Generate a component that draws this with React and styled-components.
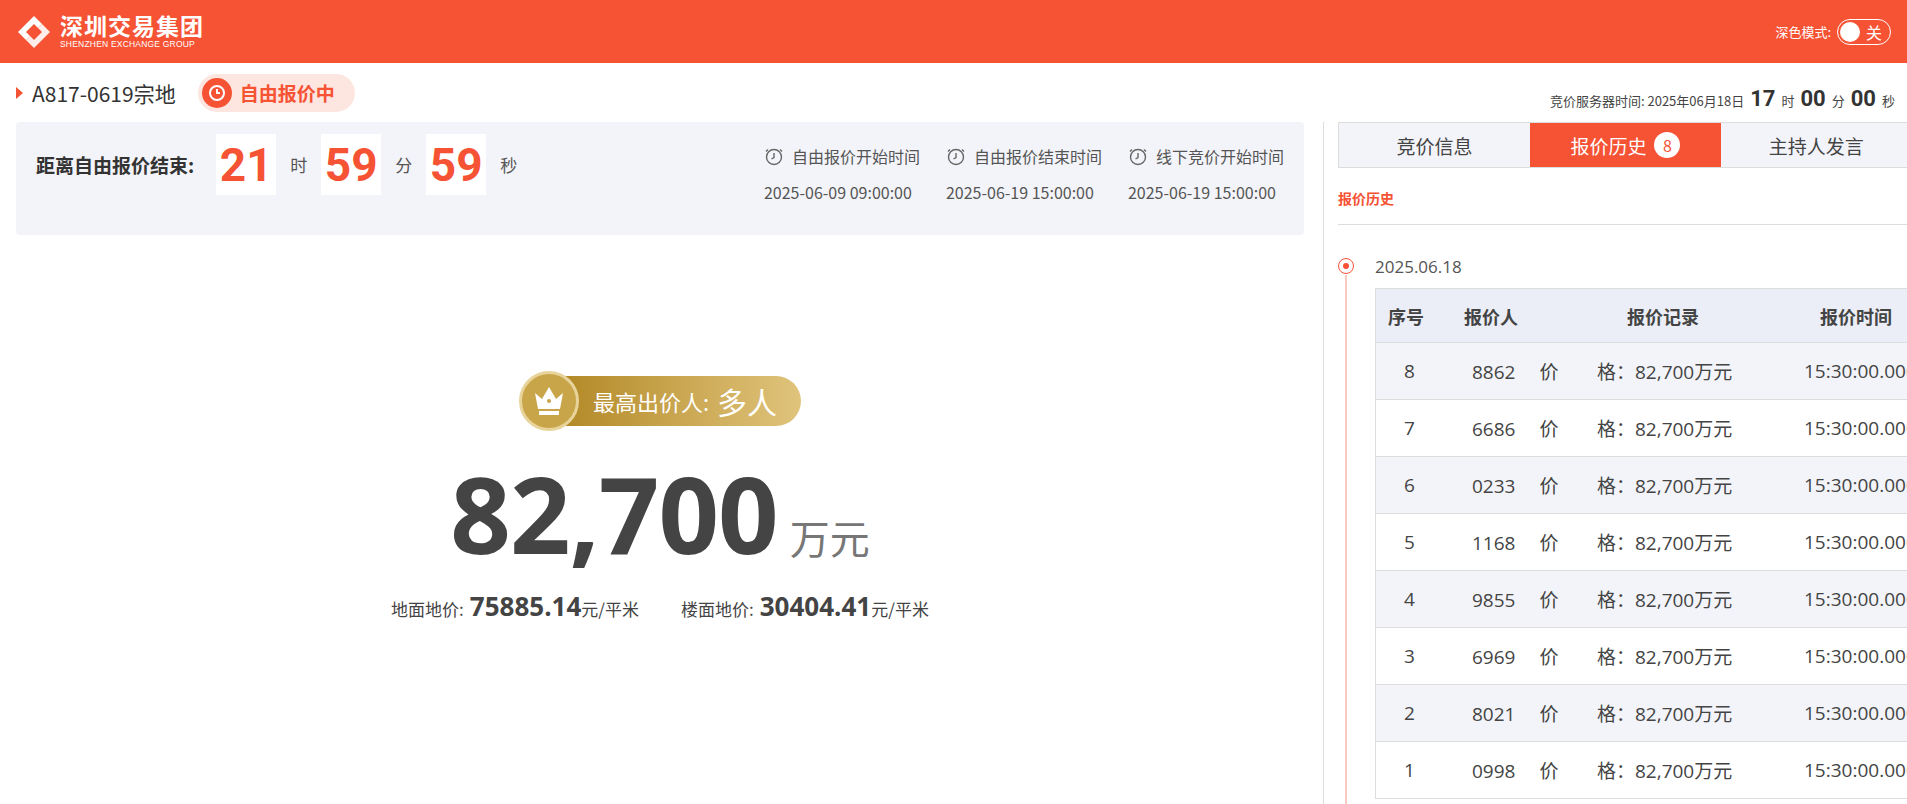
import React from "react";
import styled, { createGlobalStyle } from "styled-components";

const G = createGlobalStyle`
  html,body{margin:0;padding:0;background:#fff;}
  body{font-family:"Noto Sans CJK SC","Noto Sans",sans-serif;color:#333;overflow:hidden;}
`;
const RED = "#f65234";

const Header = styled.header`
  height:63px;background:${RED};display:flex;align-items:center;justify-content:space-between;padding:0 16px;box-sizing:border-box;
`;
const Logo = styled.div`display:flex;align-items:center;gap:8px;color:#fff;`;
const LogoText = styled.div`display:flex;flex-direction:column;line-height:1;`;
const LogoCn = styled.div`font-size:23px;font-weight:700;letter-spacing:1px;`;
const LogoEn = styled.div`font-size:8.5px;font-family:"Liberation Sans",sans-serif;margin-top:3px;letter-spacing:.2px;`;
const Dark = styled.div`display:flex;align-items:center;gap:6px;color:#fff;font-size:13px;`;
const Toggle = styled.div`
  width:54px;height:26px;border:1.5px solid #fff;border-radius:14px;box-sizing:border-box;display:flex;align-items:center;justify-content:space-between;padding:0 8px 0 2px;font-size:16px;
  &::before{content:"";width:20px;height:20px;border-radius:50%;background:#fff;}
`;
const TitleRow = styled.div`height:59px;display:flex;align-items:center;justify-content:space-between;padding:0 12px 0 16px;`;
const TitleLeft = styled.div`display:flex;align-items:center;gap:22px;`;
const Title = styled.div`display:flex;align-items:center;gap:9px;font-size:21px;color:#333;
  &::before{content:"";border-left:7px solid ${RED};border-top:6px solid transparent;border-bottom:6px solid transparent;}
`;
const Status = styled.div`display:flex;align-items:center;gap:8px;background:#fde6df;border-radius:20px;height:38px;box-sizing:border-box;padding:0 20px 0 4px;color:${RED};font-weight:700;font-size:19px;`;
const StatusIcon = styled.div`width:30px;height:30px;border-radius:50%;background:${RED};display:flex;align-items:center;justify-content:center;`;
const Server = styled.div`display:flex;align-items:baseline;gap:6px;font-size:13px;color:#444;white-space:nowrap;padding-top:12px;`;
const ServerBig = styled.b`font-family:"Roboto",sans-serif;font-size:22px;color:#333;`;
const Body = styled.div`display:flex;`;
const Left = styled.div`width:1304px;padding-left:16px;box-sizing:border-box;flex:none;`;
const Panel = styled.div`background:#f3f4f9;border-radius:4px;height:113px;display:flex;justify-content:space-between;padding:12px 20px 0 20px;box-sizing:border-box;`;
const Countdown = styled.div`display:flex;align-items:center;height:61px;font-size:16px;color:#555;`;
const CdLabel = styled.div`font-weight:700;font-size:19px;color:#333;margin-right:22px;`;
const Digit = styled.div`width:60px;height:61px;background:#fff;color:${RED};font-family:"Roboto","Noto Sans",sans-serif;font-weight:700;font-size:46px;display:flex;align-items:center;justify-content:center;`;
const Unit = styled.span`margin:0 14px;font-size:17px;color:#555;`;
const Times = styled.div`display:flex;gap:26px;padding-top:10px;`;
const TimeCol = styled.div`display:flex;flex-direction:column;gap:12px;font-size:16px;color:#555;`;
const TimeHead = styled.div`display:flex;align-items:center;gap:8px;`;
const Main = styled.div`display:flex;flex-direction:column;align-items:center;padding-top:141px;`;
const Badge = styled.div`display:flex;align-items:center;height:50px;`;
const Crown = styled.div`width:60px;height:60px;border-radius:50%;background:#c9a54a;border:3px solid #e8d49a;box-sizing:border-box;display:flex;align-items:center;justify-content:center;z-index:1;`;
const Pill = styled.div`margin-left:-14px;height:50px;padding:0 24px 0 28px;border-radius:0 26px 26px 0;background:linear-gradient(90deg,#b48a28,#e0c47c);color:#fff;display:flex;align-items:center;font-size:22px;gap:8px;`;
const Big = styled.div`display:flex;align-items:baseline;margin-top:34px;color:#444;line-height:1;`;
const BigNum = styled.span`font-family:"Open Sans","Noto Sans",sans-serif;font-weight:700;font-size:106px;letter-spacing:-1px;`;
const BigUnit = styled.span`font-size:40px;color:#777;margin-left:12px;`;
const Sub = styled.div`display:flex;gap:42px;margin-top:22px;font-size:17px;color:#444;align-items:baseline;`;
const SubVal = styled.b`font-family:"Open Sans",sans-serif;font-size:26px;margin-left:6px;`;
const Side = styled.div`flex:1;border-left:1px solid #ddd;margin-left:19px;padding-left:14px;height:700px;`;
const Tabs = styled.div`display:flex;border:1px solid #ddd;height:46px;box-sizing:border-box;margin-right:4px;`;
const Tab = styled.div`flex:1;display:flex;align-items:center;justify-content:center;gap:8px;font-size:19px;background:${p=>p.$on?RED:"#f3f4f9"};color:${p=>p.$on?"#fff":"#444"};`;
const Num = styled.span`width:26px;height:26px;border-radius:50%;background:#fff;color:${RED};font-size:16px;display:flex;align-items:center;justify-content:center;`;
const SecLabel = styled.div`color:${RED};font-size:14px;font-weight:700;padding:20px 0 16px;border-bottom:1px solid #ddd;`;
const Timeline = styled.div`position:relative;padding:30px 0 0 37px;`;
const Dot = styled.div`position:absolute;left:0;top:33px;width:16px;height:16px;border:1.5px solid ${RED};border-radius:50%;box-sizing:border-box;display:flex;align-items:center;justify-content:center;
  &::after{content:"";width:6px;height:6px;border-radius:50%;background:${RED};}`;
const Line = styled.div`position:absolute;left:7px;top:50px;bottom:-20px;width:2px;background:#f9c9c2;`;
const DateT = styled.div`font-size:17px;color:#555;margin-bottom:10px;font-family:"Open Sans",sans-serif;`;
const Table = styled.div`border:1px solid #ddd;border-right:none;`;
const Row = styled.div`display:grid;grid-template-columns:78px 140px 170px 1fr;height:${p=>p.$h}px;align-items:center;background:${p=>p.$alt?"#f3f4f9":"#fff"};border-top:${p=>p.$first?"none":"1px solid #ddd"};font-size:19px;color:#444;font-family:"Open Sans","Noto Sans CJK SC",sans-serif;`;
const HRow = styled(Row)`background:#ebeef6;font-weight:700;font-size:18px;color:#444;font-family:"Noto Sans CJK SC",sans-serif;`;
const C = styled.div`padding-left:${p=>p.$p||0}px;white-space:nowrap;`;

const ClockIcon = () => (
  <svg width="20" height="20" viewBox="0 0 20 20" fill="none" stroke="#666" strokeWidth="1.4"><circle cx="10" cy="11" r="7.5"/><path d="M10 7v4.5l-2.5 1.5M4 3.5 2 5.5M16 3.5l2 2"/></svg>
);

const rows = [["8","8862"],["7","6686"],["6","0233"],["5","1168"],["4","9855"],["3","6969"],["2","8021"],["1","0998"]];

export default function App(){
  return (<>
    <G/>
    <Header>
      <Logo>
        <svg width="36" height="36" viewBox="0 0 36 36" fill="#fff"><path d="M18 2 26 10 22 14 18 10 10 18 14 22 10 26 2 18Z"/><path d="M18 34 10 26 14 22 18 26 26 18 22 14 26 10 34 18Z" opacity=".9"/></svg>
        <LogoText><LogoCn>深圳交易集团</LogoCn><LogoEn>SHENZHEN EXCHANGE GROUP</LogoEn></LogoText>
      </Logo>
      <Dark>深色模式: <Toggle>关</Toggle></Dark>
    </Header>
    <TitleRow>
      <TitleLeft>
        <Title>A817-0619宗地</Title>
        <Status><StatusIcon><svg width="18" height="18" viewBox="0 0 18 18" fill="none" stroke="#fff" strokeWidth="2"><circle cx="9" cy="9" r="7"/><path d="M9 5v4h3"/></svg></StatusIcon>自由报价中</Status>
      </TitleLeft>
      <Server>竞价服务器时间: 2025年06月18日 <ServerBig>17</ServerBig>时<ServerBig>00</ServerBig>分<ServerBig>00</ServerBig>秒</Server>
    </TitleRow>
    <Body>
      <Left>
        <Panel>
          <Countdown>
            <CdLabel>距离自由报价结束:</CdLabel>
            <Digit>21</Digit><Unit>时</Unit><Digit>59</Digit><Unit>分</Unit><Digit>59</Digit><Unit>秒</Unit>
          </Countdown>
          <Times>
            {[["自由报价开始时间","2025-06-09 09:00:00"],["自由报价结束时间","2025-06-19 15:00:00"],["线下竞价开始时间","2025-06-19 15:00:00"]].map(([a,b])=>(
              <TimeCol key={a}><TimeHead><ClockIcon/>{a}</TimeHead><div>{b}</div></TimeCol>
            ))}
          </Times>
        </Panel>
        <Main>
          <Badge>
            <Crown><svg width="36" height="36" viewBox="0 0 36 36" fill="#fff"><path d="M4 10l7 6 7-12 7 12 7-6-3 16H7Z"/><circle cx="18" cy="18" r="2" fill="#c9a54a"/><rect x="8" y="28" width="20" height="4"/></svg></Crown>
            <Pill>最高出价人: <span style={{fontSize:30}}>多人</span></Pill>
          </Badge>
          <Big><BigNum>82,700</BigNum><BigUnit>万元</BigUnit></Big>
          <Sub>
            <span>地面地价:<SubVal>75885.14</SubVal>元/平米</span>
            <span>楼面地价:<SubVal>30404.41</SubVal>元/平米</span>
          </Sub>
        </Main>
      </Left>
      <Side>
        <Tabs><Tab>竞价信息</Tab><Tab $on>报价历史<Num>8</Num></Tab><Tab>主持人发言</Tab></Tabs>
        <SecLabel>报价历史</SecLabel>
        <Timeline>
          <Dot/><Line/>
          <DateT>2025.06.18</DateT>
          <Table>
            <HRow $h={53} $first><C $p={12}>序号</C><C $p={10}>报价人</C><C $p={33}>报价记录</C><C $p={56}>报价时间</C></HRow>
            {rows.map(([n,p],i)=>(
              <Row key={n} $h={56} $alt={i%2===0}><C $p={28}>{n}</C><C $p={18}>{p}　 价</C><C $p={3}>格：82,700万元</C><C $p={40}>15:30:00.000</C></Row>
            ))}
          </Table>
        </Timeline>
      </Side>
    </Body>
  </>);
}
